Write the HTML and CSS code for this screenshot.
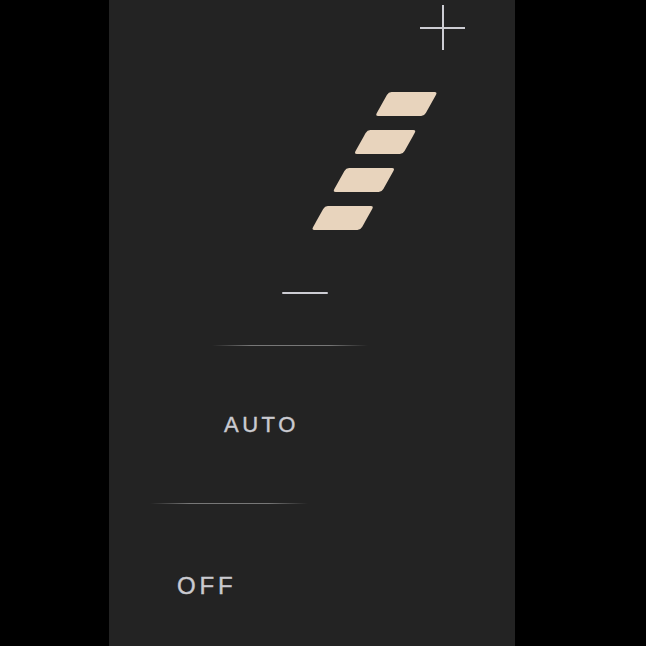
FILE: index.html
```html
<!DOCTYPE html>
<html lang="en">
<head>
  <meta charset="UTF-8">
  <title>Fan speed</title>
  <link rel="stylesheet" href="styles.css">
</head>
<body>

  <div class="panel">
    <div class="plus">
      <svg width="45" height="45" viewBox="0 0 45 45">
        <line x1="23" y1="0" x2="23" y2="45" />
        <line x1="0" y1="23" x2="45" y2="23" />
      </svg>
    </div>

    <div class="levels">
      <div class="bar"></div>
      <div class="bar"></div>
      <div class="bar"></div>
      <div class="bar"></div>
    </div>

    <div class="minus"></div>

    <div class="divider divider-top"></div>
    <div class="mode mode-auto">AUTO</div>

    <div class="divider divider-bottom"></div>
    <div class="mode mode-off">OFF</div>
  </div>

</body>
</html>
```

FILE: styles.css
```css
body {
  margin: 0;
  background: #000;
  font-family: "Liberation Sans", Arial, sans-serif;
}
.panel {
  width: 406px;
  height: 646px;
  margin-left: 109px;
  background: #232323;
  overflow: hidden;
}
.plus {
  margin-top: 5px;
  margin-left: 311px;
  height: 45px;
}
.plus svg {
  display: block;
}
.plus line {
  stroke: #cdcdd3;
  stroke-width: 2;
}
.levels {
  margin-top: 42px;
  margin-left: 241px;
  width: 49px;
  display: flex;
  flex-direction: column;
  gap: 14px;
  transform: skewX(-29.2deg);
}
.bar {
  height: 24px;
  background: #e8d4bd;
  border-radius: 3px;
}
.minus {
  margin-top: 62px;
  margin-left: 173px;
  width: 46px;
  height: 2px;
  background: #cdcdd3;
  border-radius: 1px;
}
.divider {
  height: 1px;
  background: linear-gradient(to right, rgba(120,120,120,0), #777 25%, #777 75%, rgba(120,120,120,0));
}
.divider-top {
  margin-top: 51px;
  margin-left: 103px;
  width: 156px;
}
.divider-bottom {
  margin-top: 67px;
  margin-left: 41px;
  width: 158px;
}
.mode {
  color: #cacad0;
  letter-spacing: 0.16em;
  -webkit-text-stroke: 0.4px #cacad0;
}
.mode-auto {
  margin-top: 68px;
  margin-left: 115px;
  font-size: 22px;
  line-height: 22px;
}
.mode-off {
  margin-top: 70px;
  margin-left: 68px;
  font-size: 24px;
  line-height: 24px;
}
```
